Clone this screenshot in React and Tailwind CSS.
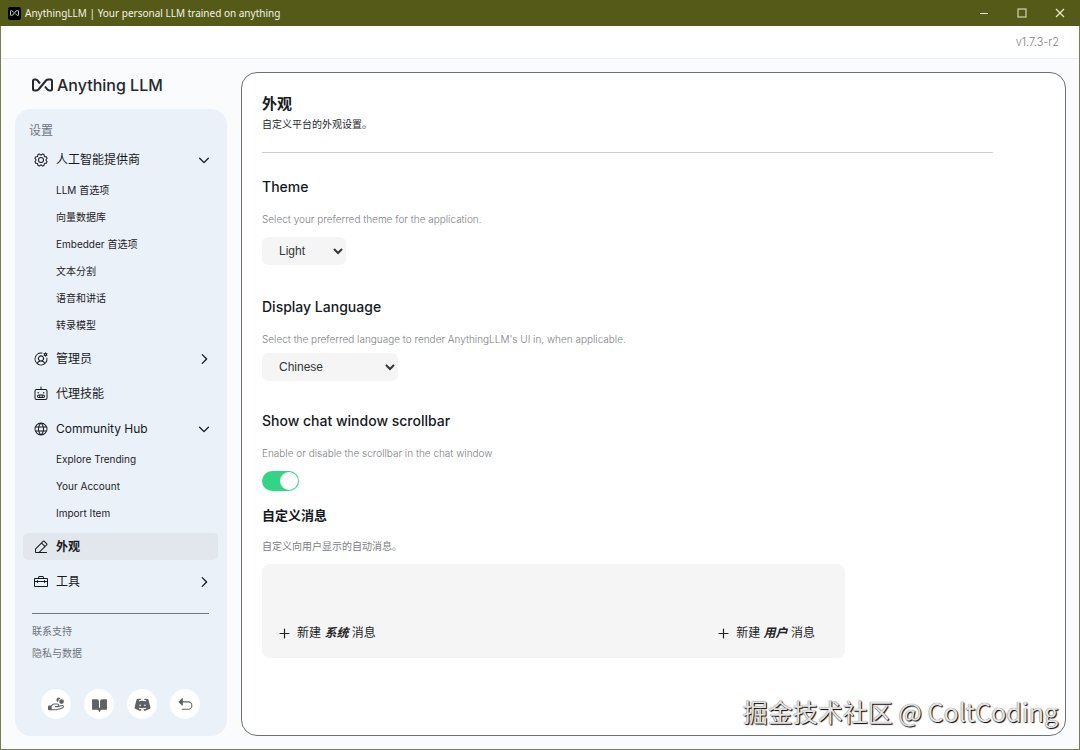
import React, { useState } from "react";
import {
  PiArrowUUpLeftFill,
  PiBookOpenFill,
  PiCaretDownBold,
  PiCaretRightBold,
  PiDiscordLogoFill,
  PiGear,
  PiGlobe,
  PiHandCoinsFill,
  PiPencilSimpleLine,
  PiPlusBold,
  PiRobot,
  PiToolbox,
  PiUserCircleGear,
} from "react-icons/pi";

const MENU = [
  {
    label: "人工智能提供商",
    icon: PiGear,
    open: true,
    children: ["LLM 首选项", "向量数据库", "Embedder 首选项", "文本分割", "语音和讲话", "转录模型"],
  },
  { label: "管理员", icon: PiUserCircleGear, children: [] },
  { label: "代理技能", icon: PiRobot },
  {
    label: "Community Hub",
    icon: PiGlobe,
    open: true,
    children: ["Explore Trending", "Your Account", "Import Item"],
  },
  { label: "外观", icon: PiPencilSimpleLine, active: true },
  { label: "工具", icon: PiToolbox, children: [] },
];

const FOOTER = [
  { label: "Support", icon: PiHandCoinsFill },
  { label: "Docs", icon: PiBookOpenFill },
  { label: "Discord", icon: PiDiscordLogoFill },
  { label: "Back", icon: PiArrowUUpLeftFill },
];

function LogoMark({ className }) {
  return (
    <svg viewBox="0 0 42 28" className={className} fill="none" stroke="currentColor" strokeWidth="4" strokeLinejoin="round" aria-hidden="true">
      <path d="M16 11 L11 5 Q9 3 7 3 H5 Q2 3 2 6 V22 Q2 25 5 25 H8 Q11 25 13 23 L28 5 Q30 3 33 3 H37 Q40 3 40 6 V22 Q40 25 37 25 H35 Q32 25 30 22 L26 17" />
    </svg>
  );
}

function TitleBar() {
  return (
    <header className="flex h-[26px] shrink-0 items-center bg-[#565a19] pr-px pl-2 text-[#f3f3e4]">
      <span className="flex size-[13px] items-center justify-center rounded-[2px] bg-black text-white">
        <LogoMark className="w-[9px]" />
      </span>
      <span className="ml-1 font-['Noto_Sans',sans-serif] text-[10px]">AnythingLLM | Your personal LLM trained on anything</span>
      <div className="ml-auto flex h-full text-[#e9eacb]">
        <button type="button" aria-label="Minimize" className="flex w-[38px] items-center justify-center">
          <svg className="size-[10px]" viewBox="0 0 10 10" stroke="currentColor"><path d="M1 5.500H9" /></svg>
        </button>
        <button type="button" aria-label="Maximize" className="flex w-[38px] items-center justify-center">
          <svg className="size-[10px]" viewBox="0 0 10 10" fill="none" stroke="currentColor"><rect x="1" y="1" width="8" height="8" /></svg>
        </button>
        <button type="button" aria-label="Close" className="flex w-[38px] items-center justify-center">
          <svg className="size-[10px]" viewBox="0 0 10 10" stroke="currentColor" strokeWidth="1.200"><path d="M1 1L9 9M9 1L1 9" /></svg>
        </button>
      </div>
    </header>
  );
}

function MenuItem({ item }) {
  const [open, setOpen] = useState(Boolean(item.open));
  const Icon = item.icon;
  const Caret = open ? PiCaretDownBold : PiCaretRightBold;

  return (
    <li>
      <button
        type="button"
        onClick={() => setOpen(!open)}
        className={`flex h-[27px] w-full items-center rounded-[5px] pr-[7px] pl-[10px] text-xs text-[#16191d] ${item.active ? "bg-[#e2e7ee] font-semibold" : ""}`}
      >
        <Icon size={16} className="shrink-0" />
        <span className="ml-[7px]">{item.label}</span>
        {item.children && <Caret size={14} className="ml-auto" />}
      </button>
      {open && item.children?.length > 0 && (
        <ul className="mt-1 -mb-0.5 pl-[33px]">
          {item.children.map((child) => (
            <li key={child} className="flex h-[27px] items-center text-[10px] text-[#1d2126]">
              <a href="#">{child}</a>
            </li>
          ))}
        </ul>
      )}
    </li>
  );
}

function Sidebar() {
  return (
    <aside className="flex w-[212px] shrink-0 flex-col">
      <div className="flex h-[37px] items-center pb-3 pl-[17px] text-[#25282c]">
        <LogoMark className="w-[21px]" />
        <span className="ml-1 text-base font-medium">Anything LLM</span>
      </div>
      <nav className="flex flex-1 flex-col rounded-[16px] bg-[#ebf1f9] pt-[13px] pr-[9px] pb-[17px] pl-2">
        <h2 className="pl-1.5 text-xs leading-[18px] text-[#6d747c]">设置</h2>
        <ul className="mt-1.5 flex flex-col gap-2">
          {MENU.map((item) => (
            <MenuItem key={item.label} item={item} />
          ))}
        </ul>
        <div className="mx-[9px] mt-[18px] flex flex-col gap-1.5 border-t border-[#73777c] pt-[9px] text-[10px] leading-4 text-[#6d747c]">
          <a href="#">联系支持</a>
          <a href="#">隐私与数据</a>
        </div>
        <div className="mt-auto flex justify-center gap-[13px] pt-4">
          {FOOTER.map(({ label, icon: Icon }) => (
            <a key={label} href="#" aria-label={label} className="flex size-[30px] items-center justify-center rounded-full bg-white text-[#5f6265]">
              <Icon size={17} />
            </a>
          ))}
        </div>
      </nav>
    </aside>
  );
}

function Setting({ id, title, description, children, className }) {
  return (
    <section className={className}>
      <h2 className="text-sm leading-5 font-medium text-[#16191d]">
        <label htmlFor={id}>{title}</label>
      </h2>
      <p className="mt-3 text-[10px] leading-5 font-light text-[#7d8083]">{description}</p>
      {children}
    </section>
  );
}

function AddMessage({ kind }) {
  return (
    <button type="button" className="flex items-center text-xs leading-5 text-[#222427]">
      <PiPlusBold size={13} />
      <span className="ml-1.5">
        新建 <em className="font-bold">{kind}</em> 消息
      </span>
    </button>
  );
}

function AppearancePanel() {
  const [scrollbar, setScrollbar] = useState(true);

  return (
    <main className="min-w-0 flex-1 rounded-[16px] border border-[#6d7174] bg-white pt-5 pr-[72px] pb-5 pl-5">
      <div className="border-b border-[#c9cbcd] pb-[19px]">
        <h1 className="text-[15px] leading-[22px] font-bold text-[#16191d]">外观</h1>
        <p className="text-[10px] leading-[18px] text-[#25282c]">自定义平台的外观设置。</p>
      </div>

      <Setting id="theme" title="Theme" description="Select your preferred theme for the application." className="mt-6">
        <select id="theme" defaultValue="Light" className="mt-2 block h-7 w-[84px] rounded-md bg-[#f5f5f5] px-[13px] font-['Liberation_Sans',sans-serif] text-xs text-[#33363a]">
          <option>Light</option>
          <option>Dark</option>
        </select>
      </Setting>

      <Setting id="language" title="Display Language" description="Select the preferred language to render AnythingLLM's UI in, when applicable." className="mt-8">
        <select id="language" defaultValue="Chinese" className="mt-1 block h-7 w-[136px] rounded-md bg-[#f5f5f5] px-[13px] font-['Liberation_Sans',sans-serif] text-xs text-[#33363a]">
          <option>Chinese</option>
          <option>English</option>
        </select>
      </Setting>

      <Setting id="scrollbar" title="Show chat window scrollbar" description="Enable or disable the scrollbar in the chat window" className="mt-[30px]">
        <input
          id="scrollbar"
          type="checkbox"
          role="switch"
          checked={scrollbar}
          onChange={(e) => setScrollbar(e.target.checked)}
          className="mt-2 flex h-5 w-[37px] appearance-none items-center rounded-full bg-[#c9cbcd] px-px before:size-[18px] before:rounded-full before:bg-white checked:justify-end checked:bg-[#32d583]"
        />
      </Setting>

      <section className="mt-3.5">
        <h2 className="text-[13px] leading-5 font-semibold text-[#16191d]">自定义消息</h2>
        <p className="mt-[11px] text-[10px] leading-5 text-[#7d8083]">自定义向用户显示的自动消息。</p>
        <div className="mt-2 flex h-[94px] max-w-[583px] items-end justify-between rounded-lg bg-[#f5f5f5] pr-[30px] pb-[15px] pl-4">
          <AddMessage kind="系统" />
          <AddMessage kind="用户" />
        </div>
      </section>
    </main>
  );
}

export default function App() {
  return (
    <div className="relative flex min-h-screen flex-col bg-[#f9fbfd] font-['Inter','Noto_Sans_CJK_SC',sans-serif]">
      <TitleBar />
      <div className="flex flex-1 flex-col border-x border-b border-[#7b7e4d]">
        <div className="flex h-[33px] items-center justify-end border-b border-[#eceff1] bg-white pr-5 text-[11px] font-light text-[#7d8083]">v1.7.3-r2</div>
        <div className="flex flex-1 gap-3.5 pt-[13px] pr-[13px] pb-[13px] pl-3.5">
          <Sidebar />
          <AppearancePanel />
        </div>
      </div>
      <div className="pointer-events-none absolute right-[22px] bottom-[18px] font-['Noto_Sans_CJK_SC',sans-serif] text-[25px] leading-[42px] text-[#e4e4e4] [text-shadow:1px_1px_1px_#000,0_0_1px_#555]">
        掘金技术社区 @ ColtCoding
      </div>
    </div>
  );
}
